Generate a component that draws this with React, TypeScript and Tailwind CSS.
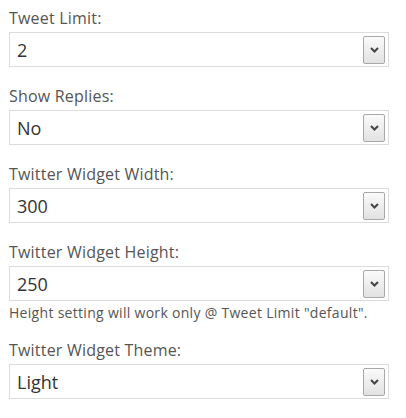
import * as React from "react"

interface Field {
  label: string
  value: string
  help?: string
}

const fields: Field[] = [
  { label: "Tweet Limit:", value: "2" },
  { label: "Show Replies:", value: "No" },
  { label: "Twitter Widget Width:", value: "300" },
  {
    label: "Twitter Widget Height:",
    value: "250",
    help: 'Height setting will work only @ Tweet Limit "default".',
  },
  { label: "Twitter Widget Theme:", value: "Light" },
]

function Chevron() {
  return (
    <svg width="9" height="6" viewBox="0 0 9 6" className="block">
      <path d="M1 1 L4.5 4.5 L8 1" fill="none" stroke="#444" strokeWidth="2" />
    </svg>
  )
}

function SelectBox({ value }: { value: string }) {
  return (
    <div className="flex h-[35px] items-center justify-between border border-[#dcdcdc] bg-white pl-[7px] pr-[3px]">
      <span className="text-[18px] leading-none text-[#333]">{value}</span>
      <div className="flex h-[28px] w-[22px] items-center justify-center rounded-[2px] border border-[#a8a8a8] bg-gradient-to-b from-[#fafafa] to-[#e2e2e2]">
        <Chevron />
      </div>
    </div>
  )
}

export default function App() {
  return (
    <div
      className="min-h-[418px] w-[406px] bg-white pl-[9px] pr-[17px] pt-[9px]"
      style={{ fontFamily: '"Open Sans", "Noto Sans", sans-serif' }}
    >
      {fields.map((f) => (
        <div key={f.label} className="mb-[20px]">
          <label className="mb-[5px] block text-[16px] leading-[18px] tracking-[0.2px] text-[#555]">
            {f.label}
          </label>
          <SelectBox value={f.value} />
          {f.help && (
            <p className="mt-[4px] text-[14px] leading-[16px] tracking-[0.3px] text-[#555]">{f.help}</p>
          )}
        </div>
      ))}
    </div>
  )
}
